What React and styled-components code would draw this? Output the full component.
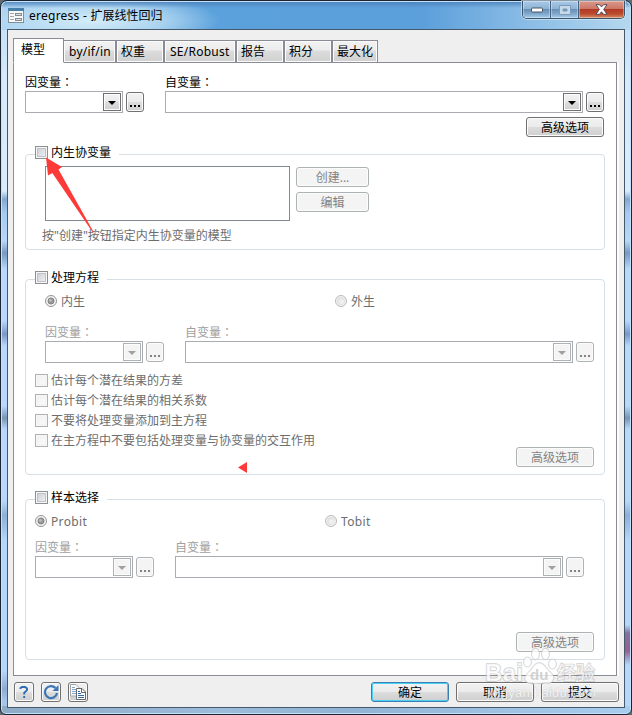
import React from "react";
import styled, { createGlobalStyle, css } from "styled-components";

const Global = createGlobalStyle`
  * { box-sizing: border-box; }
  html, body { margin: 0; padding: 0; overflow: hidden; }
  body {
    background: #5d6a72;
    font-family: "Noto Sans", "Noto Sans CJK SC", sans-serif;
    font-size: 12px;
    line-height: 16px;
    color: #000;
  }
  button { font: inherit; }
`;

const Window = styled.div`
  position: relative;
  width: 632px;
  height: 715px;
  padding: 2px 6px 6px;
  border: 1px solid #1b2430;
  border-radius: 7px 7px 6px 6px;
  box-shadow: inset 0 0 0 1px #c3e2fa;
  background:
    linear-gradient(180deg, #4d82bb 0, rgba(77, 130, 187, 0) 7px),
    radial-gradient(ellipse 130px 28px at 90px 20px, #d4ecf8 0, rgba(190, 224, 245, 0.75) 55%, rgba(150, 200, 236, 0) 100%) 0 0 / 100% 29px no-repeat,
    linear-gradient(90deg, #a5cdee 0, #5ba1dc 210px, #5b9fdb 420px, #90c0e7 540px, #b5d8ef 100%) 0 0 / 100% 29px no-repeat,
    linear-gradient(90deg, #8eabc6, #9dbbda 35%, #91b3d3 55%, #a9cdef) 0 100% / 100% 8px no-repeat,
    linear-gradient(180deg, #bddcf6 0, #d5eafc 80px, #d9ecfd 190px, #84a9d0 198px, #a5cbf1 212px, #b6d7f8 240px, #7699c1 252px, #b5d8fb 268px, #b5d8fb 320px, #7899c8 333px, #b5d8fb 345px, #b5d8fb 405px, #7796b6 417px, #b5d8fb 428px, #b5d8fb 500px, #8cb0d5 514px, #b4d8fc 540px, #b4d8fc 624px, #85719e 632px, #96618f 650px, #b4d8fc 664px) 100% 0 / 50% 100% no-repeat,
    linear-gradient(180deg, #bddcf6 0, #d5eafc 80px, #d9ecfd 190px, #84a9d0 198px, #a5cbf1 212px, #b6d7f8 240px, #7699c1 252px, #b5d8fb 268px, #b5d8fb 320px, #7899c8 333px, #b5d8fb 345px, #b5d8fb 405px, #7796b6 417px, #b5d8fb 428px, #b5d8fb 500px, #8cb0d5 514px, #b4d8fc 540px, #b4d8fc 670px, #8cacd2 688px, #a4c6ea 700px);
`;

const TitleBar = styled.header`
  display: flex;
  height: 26px;
  padding-left: 1px;
  align-items: flex-start;
`;

const AppIcon = styled.svg`
  margin-top: 5px;
  flex: none;
`;

const Title = styled.h1`
  flex: 1;
  margin: 4px 0 0 5px;
  font-size: 12px;
  font-weight: 400;
  line-height: 17px;
  white-space: nowrap;
`;

const Latin = styled.span`
  letter-spacing: 0.25px;
`;

const Caption = styled.div`
  display: flex;
  height: 18px;
  margin-top: -2px;
  border: 1px solid #3d526b;
  border-top: 0;
  border-radius: 0 0 5px 5px;
  overflow: hidden;
  box-shadow: 0 0 0 1px rgba(220, 238, 252, 0.6);
`;

const CaptionButton = styled.button`
  display: flex;
  align-items: center;
  justify-content: center;
  width: ${(p) => p.$width}px;
  padding: 0;
  border: 0;
  border-left: ${(p) => (p.$first ? "0" : "1px solid #47607c")};
  box-shadow: inset 0 0 0 1px rgba(255, 255, 255, 0.35);
  background: ${(p) =>
    p.$close
      ? "linear-gradient(180deg, #d99a8c 0, #cd7767 45%, #b13a25 50%, #bb4a2d 75%, #d68b62 100%)"
      : "linear-gradient(180deg, #a9c9e7 0, #8fb4d6 45%, #688fb5 50%, #7fa8cc 75%, #a6cdea 100%)"};
`;

const Client = styled.main`
  display: flex;
  flex-direction: column;
  width: 618px;
  height: 679px;
  padding: 8px 5px 5px;
  border: 1px solid #44596c;
  background: #efefef;
`;

const Tabs = styled.nav`
  display: flex;
  align-items: flex-end;
  height: 25px;
  margin-bottom: -1px;
  z-index: 1;
`;

const Tab = styled.div`
  width: ${(p) => p.$width}px;
  height: 23px;
  padding: 3px 0 0 ${(p) => (p.$latin ? 5 : 4)}px;
  border: 1px solid #898c95;
  border-left-width: ${(p) => (p.$first ? 0 : 1)}px;
  box-shadow: inset 0 0 0 1px #fbfbfb;
  background: linear-gradient(180deg, #f2f2f2 0, #ececec 9px, #dcdcdc 10px, #d0d0d0 100%);
  line-height: 16px;
  letter-spacing: ${(p) => (p.$latin ? 0.25 : 0)}px;
  white-space: nowrap;
  ${(p) =>
    p.$active &&
    css`
      height: 25px;
      padding-left: 7px;
      border-left-width: 1px;
      border-bottom-color: #fff;
      box-shadow: none;
      background: #fff;
    `}
`;

const Panel = styled.section`
  display: flex;
  flex-direction: column;
  width: 604px;
  height: 614px;
  padding: 12px 11px 0;
  border: 1px solid #898c95;
  background: #fff;
  box-shadow: 2px 0 0 #fbfbfb;
`;

const Fields = styled.div`
  display: flex;
  gap: 21px;
  margin-top: ${(p) => p.$top || 0}px;
  margin-left: ${(p) => p.$left || 0}px;
`;

const Field = styled.div`
  display: grid;
  grid-template-columns: ${(p) => p.$width}px 18px;
  grid-template-rows: 16px 22px;
  column-gap: 3px;
  color: ${(p) => (p.$disabled ? "#a0a0a0" : "#000")};
`;

const FieldLabel = styled.label`
  grid-column: 1 / 3;
  line-height: 16px;
`;

const Colon = styled.span`
  font-family: "Noto Sans CJK TC", sans-serif;
  line-height: 1;
`;

const Combo = styled.div`
  display: flex;
  justify-content: flex-end;
  height: 22px;
  padding: 1px;
  border: 1px solid #aaacb2;
  background: #fff;
`;

const ComboArrow = styled.span`
  display: flex;
  align-items: center;
  justify-content: center;
  width: 18px;
  height: 18px;
  padding-top: 2px;
  border: 1px solid ${(p) => (p.$disabled ? "#adb2b5" : "#707070")};
  box-shadow: inset 0 0 0 1px #fcfcfc;
  background: ${(p) => (p.$disabled ? "#f4f4f4" : "linear-gradient(180deg, #f2f2f2 0, #ebebeb 50%, #dddddd 51%, #cfcfcf 100%)")};
`;

const Button = styled.button`
  display: flex;
  align-items: center;
  justify-content: center;
  flex: none;
  width: ${(p) => p.$width || 78}px;
  height: 20px;
  padding: ${(p) => (p.$icon ? 0 : 2)}px 0 0;
  border: 1px solid #707070;
  border-radius: 3px;
  box-shadow: inset 0 0 0 1px #fcfcfc;
  background: linear-gradient(180deg, #f2f2f2 0, #ebebeb 48%, #dddddd 50%, #cfcfcf 100%);
  color: #000;
  line-height: 16px;
  ${(p) =>
    p.$primary &&
    css`
      border-color: #3c7fb1;
      box-shadow: inset 0 0 0 1px #48d0f5;
    `}
  &:disabled {
    border-color: #adb2b5;
    background: #f4f4f4;
    color: #838383;
  }
`;

const MoreButton = styled(Button)`
  width: 18px;
  margin-top: 1px;
`;

const Advanced = styled(Button)`
  align-self: flex-end;
  margin-top: ${(p) => p.$top}px;
  margin-right: ${(p) => p.$right || 0}px;
`;

const Group = styled.fieldset`
  display: block;
  min-width: 0;
  width: 580px;
  height: ${(p) => p.$height}px;
  margin: ${(p) => p.$top}px 0 0;
  padding: 0 10px 0 9px;
  border: 1px solid #d5dfe5;
  border-radius: 4px;
`;

const Legend = styled.legend`
  width: ${(p) => p.$width}px;
  height: 17px;
  padding: 0;
`;

const GroupBody = styled.div`
  display: flex;
  flex-direction: column;
`;

const CheckLabel = styled.label`
  display: flex;
  gap: 3px;
  height: ${(p) => p.$height || 17}px;
  color: ${(p) => (p.$disabled ? "#6d6d6d" : "#000")};
  line-height: 13px;
  white-space: nowrap;
`;

const Box = styled.span`
  flex: none;
  width: 13px;
  height: 13px;
  border: 1px solid ${(p) => (p.$disabled ? "#b1b1b1" : "#8e8f8f")};
  box-shadow: inset 0 0 0 1px #f6f6f6, inset 0 0 0 2px ${(p) => (p.$disabled ? "#f3f3f3" : "#bfc3c9")};
  background: ${(p) => (p.$disabled ? "linear-gradient(135deg, #efefef, #fcfcfc)" : "linear-gradient(135deg, #c5cad1, #f5f6f7)")};
`;

const Covariates = styled.div`
  display: flex;
  gap: 6px;
  margin: 3px 0 0 10px;
`;

const ListBox = styled.div`
  width: 245px;
  height: 55px;
  border: 1px solid #828790;
  background: #fff;
`;

const ButtonStack = styled.div`
  display: flex;
  flex-direction: column;
  gap: 5px;
  padding-top: 1px;
`;

const Hint = styled.p`
  margin: 7px 0 0 7px;
  color: #6d6d6d;
  line-height: 15px;
`;

const Radios = styled.div`
  display: grid;
  grid-template-columns: 290px auto;
  margin: ${(p) => p.$top}px 0 0 ${(p) => p.$left}px;
`;

const RadioLabel = styled.label`
  display: flex;
  gap: 4px;
  height: 12px;
  color: #6d6d6d;
  line-height: 14px;
  letter-spacing: ${(p) => (p.$latin ? 0.35 : 0)}px;
`;

const Checks = styled.div`
  display: flex;
  flex-direction: column;
  margin-top: 11px;
`;

const Footer = styled.footer`
  display: flex;
  gap: 7px;
  margin: 6px 0 0 1px;
`;

const FooterGap = styled.span`
  flex: 1;
`;

const FormActions = styled.div`
  display: flex;
  flex: none;
  gap: 7px;
`;

const Overlay = styled.svg`
  position: absolute;
  left: ${(p) => p.$x}px;
  top: ${(p) => p.$y}px;
  pointer-events: none;
  z-index: 3;
`;

function Arrow({ disabled }) {
  return (
    <ComboArrow $disabled={disabled}>
      <svg width="8" height="4" viewBox="0 0 8 4">
        <path d="M0 0H8L4 4Z" fill={disabled ? "#a0a0a0" : "#000"} />
      </svg>
    </ComboArrow>
  );
}

function VariableField({ label, width, disabled }) {
  return (
    <Field $width={width} $disabled={disabled}>
      <FieldLabel>{label}<Colon>：</Colon></FieldLabel>
      <Combo><Arrow disabled={disabled} /></Combo>
      <MoreButton $icon disabled={disabled} aria-label="更多">
        <svg width="12" height="14" shapeRendering="crispEdges">
          <path d="M1 10h2v2H1zM5 10h2v2H5zM9 10h2v2H9z" fill={disabled ? "#838383" : "#000"} />
        </svg>
      </MoreButton>
    </Field>
  );
}

function VariableFields({ top, left, wide, disabled }) {
  return (
    <Fields $top={top} $left={left}>
      <VariableField label="因变量" width={98} disabled={disabled} />
      <VariableField label="自变量" width={wide} disabled={disabled} />
    </Fields>
  );
}

function Check({ children, disabled, height }) {
  return (
    <CheckLabel $disabled={disabled} $height={height}>
      <Box $disabled={disabled} />
      {children}
    </CheckLabel>
  );
}

function Radio({ children, selected, latin }) {
  return (
    <RadioLabel $latin={latin}>
      <svg width="12" height="12" viewBox="0 0 12 12">
        <circle cx="6" cy="6" r="5.5" fill="#f4f4f4" stroke={selected ? "#949494" : "#b9b9b9"} />
        <circle cx="6" cy="6" r="4" fill={selected ? "#f0f0f0" : "#e2e2e2"} />
        {selected ? <circle cx="6" cy="6" r="3" fill="#999" stroke="#808080" /> : <circle cx="6.6" cy="6.6" r="2.6" fill="#efefef" />}
        {selected && <circle cx="5.3" cy="5.2" r="1.3" fill="#c2c2c2" />}
      </svg>
      {children}
    </RadioLabel>
  );
}

const TABS = [
  { name: "模型", width: 51 },
  { name: "by/if/in", width: 52, latin: true },
  { name: "权重", width: 48 },
  { name: "SE/Robust", width: 72, latin: true },
  { name: "报告", width: 48 },
  { name: "积分", width: 48 },
  { name: "最大化", width: 46 },
];

const OUTCOME_OPTIONS = [
  "估计每个潜在结果的方差",
  "估计每个潜在结果的相关系数",
  "不要将处理变量添加到主方程",
  "在主方程中不要包括处理变量与协变量的交互作用",
];

export default function App() {
  return (
    <>
      <Global />
      <Window>
        <TitleBar>
          <AppIcon width="16" height="15" viewBox="0 0 16 15" shapeRendering="crispEdges">
            <rect x=".5" y=".5" width="15" height="14" fill="#f7f8f8" stroke="#7e8d98" />
            <path d="M0 0H16V3H0Z" fill="#477fa9" />
            <path d="M2 5.5h4M2 8.5h4M2 11.5h4" stroke="#a4a9ac" />
            <path d="M7.5 5.5h6v2h-6zM7.5 10.5h6v2h-6z" fill="#dce0e2" stroke="#858b90" />
          </AppIcon>
          <Title><Latin>eregress - </Latin>扩展线性回归</Title>
          <Caption>
            <CaptionButton $first $width={27} aria-label="最小化">
              <svg width="12" height="6" viewBox="0 0 12 6"><rect x=".5" y="1" width="11" height="4" rx="1" fill="#fff" stroke="#485263" /></svg>
            </CaptionButton>
            <CaptionButton $width={28} aria-label="还原">
              <svg width="12" height="10" viewBox="0 0 12 10"><path d="M.5.5h11v9H.5zM4 4v2h4V4z" fill="#c4d9ea" fillRule="evenodd" stroke="#7d9bb8" /></svg>
            </CaptionButton>
            <CaptionButton $close $width={46} aria-label="关闭">
              <svg width="13" height="11" viewBox="0 0 13 11"><path d="M1 .7h3.5l2 2.2 2-2.2H12L8.7 5.4 12 10.3H8.5l-2-2.5-2 2.5H1l3.3-4.9Z" fill="#fff" stroke="#5a4b55" strokeWidth="1" /></svg>
            </CaptionButton>
          </Caption>
        </TitleBar>

        <Client>
          <Tabs>
            {TABS.map((tab, i) => (
              <Tab key={tab.name} $width={tab.width} $latin={tab.latin} $active={i === 0} $first={i === 1}>{tab.name}</Tab>
            ))}
          </Tabs>
          <Panel>
            <VariableFields wide={418} />
            <Advanced $top={4} $right={1}>高级选项</Advanced>

            <Group $height={104} $top={9}>
              <Legend $width={84}><Check>内生协变量</Check></Legend>
              <GroupBody>
                <Covariates>
                  <ListBox />
                  <ButtonStack>
                    <Button $width={73} disabled>创建...</Button>
                    <Button $width={73} disabled>编辑</Button>
                  </ButtonStack>
                </Covariates>
                <Hint>按"创建"按钮指定内生协变量的模型</Hint>
              </GroupBody>
            </Group>

            <Group $height={204} $top={21}>
              <Legend $width={72}><Check>处理方程</Check></Legend>
              <GroupBody>
                <Radios $top={7} $left={10}>
                  <Radio selected>内生</Radio>
                  <Radio>外生</Radio>
                </Radios>
                <VariableFields top={18} left={10} wide={388} disabled />
                <Checks>
                  {OUTCOME_OPTIONS.map((option) => (
                    <Check key={option} disabled height={20}>{option}</Check>
                  ))}
                </Checks>
                <Advanced $top={-7} disabled>高级选项</Advanced>
              </GroupBody>
            </Group>

            <Group $height={169} $top={16}>
              <Legend $width={72}><Check>样本选择</Check></Legend>
              <GroupBody>
                <Radios $top={7} $left={0}>
                  <Radio selected latin>Probit</Radio>
                  <Radio latin>Tobit</Radio>
                </Radios>
                <VariableFields top={13} left={0} wide={388} disabled />
                <Advanced $top={54} disabled>高级选项</Advanced>
              </GroupBody>
            </Group>
          </Panel>

          <Footer>
            <Button $icon $width={20} aria-label="帮助">
              <svg width="12" height="14" viewBox="0 0 12 14" fill="none" stroke="#2e6db4" strokeWidth="1.9"><path d="M2.5 4V3L4 2h3.2L9 3.5v1.7L6.2 7.8v1.7M6.2 11v2" /></svg>
            </Button>
            <Button $icon $width={20} aria-label="重置">
              <svg width="16" height="16" viewBox="0 0 16 16"><path d="M12.5 4.1A6 6 0 1 0 14 9" fill="none" stroke="#3c77b5" strokeWidth="2.2" /><path d="M15.5 1v6h-6Z" fill="#3c77b5" /></svg>
            </Button>
            <Button $icon $width={20} aria-label="复制">
              <svg width="16" height="16" viewBox="0 0 16 16">
                <path d="M.5.5H6L9.5 4v8h-9Z" fill="#fafafa" stroke="#a6a6a6" />
                <path d="M2 3.5h3M2 5.5h5M2 7.5h5M2 9.5h5" stroke="#7fa8d3" />
                <path d="M6.5 4.5H12L15.5 8v7.5h-9Z" fill="#fff" stroke="#686868" />
                <path d="M11.5 4.5v4h4" fill="none" stroke="#686868" />
                <path d="M8 7.5h2M8 9.5h3M8 11.5h6M8 13.5h6" stroke="#3269aa" />
              </svg>
            </Button>
            <FooterGap />
            <FormActions>
              <Button $primary>确定</Button>
              <Button>取消</Button>
              <Button>提交</Button>
            </FormActions>
          </Footer>
        </Client>

        <Overlay $x={43} $y={156} width="54" height="78" viewBox="44 157 54 78">
          <path d="M46 157.5L48 175.5L52.3 173L92.5 232L93.3 231.5L58.5 169.5L62 167Z" fill="#fc3b38" />
        </Overlay>
        <Overlay $x={237} $y={461} width="10" height="11" viewBox="0 0 10 11">
          <path d="M0 5.5L9 0V11Z" fill="#fc3b38" />
        </Overlay>
        <Overlay $x={479} $y={643} width="130" height="60" viewBox="480 644 130 60">
          <g fill="#fff" fillOpacity=".75" stroke="#a8a8a8" strokeOpacity=".55" strokeWidth="1.4" paintOrder="stroke" fontFamily="Liberation Sans, Noto Sans CJK SC, sans-serif">
            <text x="485" y="681" fontSize="24" fontWeight="700" textLength="38">Bai</text>
            <ellipse cx="527.5" cy="662" rx="3.6" ry="4.8" />
            <ellipse cx="535.5" cy="654" rx="3.6" ry="5.5" />
            <ellipse cx="545.5" cy="654" rx="3.6" ry="5.5" />
            <ellipse cx="552.5" cy="664" rx="3.6" ry="4.8" />
            <path d="M539 663c4 0 6 3 9 7 4 4 7 6 5 10-2 5-9 3-14 3s-13 2-14-4c0-4 3-6 6-9 3-4 4-7 8-7Z" />
            <text x="530" y="680" fontSize="15" fontWeight="700" fill="#c4c4c4" stroke="none">du</text>
            <text x="557" y="680" fontSize="19" fontWeight="500" textLength="38">经验</text>
            <text x="487" y="697" fontSize="13" textLength="109" strokeWidth=".8" strokeOpacity=".35">jingyan.baidu.com</text>
          </g>
        </Overlay>
      </Window>
    </>
  );
}
